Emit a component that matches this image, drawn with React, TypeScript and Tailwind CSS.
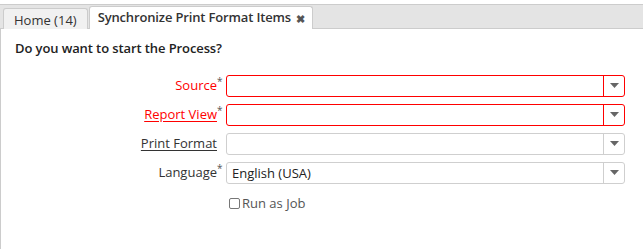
const font = { fontFamily: '"Open Sans", "Noto Sans", sans-serif' };

function Caret() {
  return (
    <svg width="9" height="5" viewBox="0 0 9 5" className="block">
      <path d="M0 0h9L4.5 5z" fill="#666" />
    </svg>
  );
}

type Row = {
  label: string;
  required?: boolean;
  link?: boolean;
  error?: boolean;
  value?: string;
};

const rows: Row[] = [
  { label: "Source", required: true, error: true },
  { label: "Report View", required: true, link: true, error: true },
  { label: "Print Format", link: true },
  { label: "Language", required: true, value: "English (USA)" },
];

function Field({ row }: { row: Row }) {
  const border = row.error ? "border-[#ff0000]" : "border-[#cfcfcf]";
  return (
    <div className="flex items-center h-[22px]">
      <div className="w-[225px] pr-[4px] flex justify-end items-start text-[13px]">
        <span
          className={
            (row.error ? "text-[#ff0000] " : "text-[#333] ") +
            (row.link ? "underline underline-offset-2" : "")
          }
        >
          {row.label}
        </span>
        {row.required && <span className="text-[10px] text-[#555] -mt-[2px] w-[5px]">*</span>}
        {!row.required && <span className="w-[5px]" />}
      </div>
      <div className={`flex h-[22px] w-[399px] border ${border} rounded-[3px] bg-white`}>
        <div className="flex-1 px-[5px] text-[13px] text-[#222] leading-[20px]">{row.value}</div>
        <div className={`w-[21px] border-l ${border} flex items-center justify-center`}>
          <Caret />
        </div>
      </div>
    </div>
  );
}

export default function App() {
  return (
    <div className="w-[643px] h-[249px] bg-white" style={font}>
      <div className="h-[4px]" />
      <div className="h-[25px] bg-[#e4e4e4] border-t border-b border-[#cccccc] flex items-end pl-[3px] gap-[1px]">
        <div className="h-[21px] -mb-px px-[10px] bg-[#f1f1f1] border border-b-0 border-[#cccccc] rounded-t-[3px] text-[13px] text-[#333] leading-[22px]">
          Home (14)
        </div>
        <div className="h-[23px] -mb-px pl-[8px] pr-[7px] bg-white border border-b-0 border-[#cccccc] rounded-t-[3px] flex items-center gap-[5px]">
          <span className="text-[13px] font-semibold text-[#333] tracking-[-0.15px]">Synchronize Print Format Items</span>
          <span className="text-[#555] text-[11px] font-bold leading-none">✖</span>
        </div>
      </div>
      <div className="border-l border-[#cccccc] h-[220px]">
        <div className="pl-[14px] pt-[10px] text-[13px] font-semibold text-[#222] tracking-[-0.1px]">
          Do you want to start the Process?
        </div>
        <div className="mt-[16px] flex flex-col gap-[7px]">
          {rows.map((r) => (
            <Field key={r.label} row={r} />
          ))}
        </div>
        <div className="mt-[10px] pl-[228px] flex items-center gap-[2px] text-[13px] text-[#555]">
          <span className="w-[11px] h-[11px] border border-[#777] rounded-[2px] inline-block" />
          <span>Run as Job</span>
        </div>
      </div>
    </div>
  );
}
